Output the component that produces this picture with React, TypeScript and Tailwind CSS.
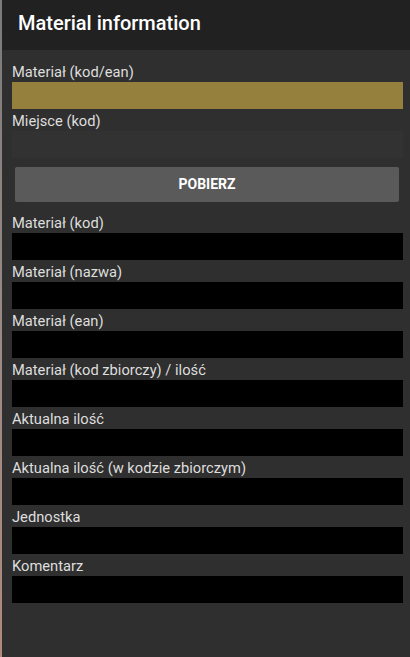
import React from "react";

const fields = [
  "Materiał (kod)",
  "Materiał (nazwa)",
  "Materiał (ean)",
  "Materiał (kod zbiorczy) / ilość",
  "Aktualna ilość",
  "Aktualna ilość (w kodzie zbiorczym)",
  "Jednostka",
  "Komentarz",
];

const Label: React.FC<{ text: string }> = ({ text }) => (
  <div className="h-[22px] pl-[10px] pt-[1px] text-[14.7px] leading-[22px] text-[#dedede]">{text}</div>
);

export default function App() {
  return (
    <div className="flex h-[657px] w-[410px] font-['Roboto',sans-serif]">
      <div className="w-[2px] bg-gradient-to-b from-[#7a7a7a] via-[#9a8a86] to-[#b08a7c]" />
      <div className="flex flex-1 flex-col bg-[#2f2f2f]">
        <div className="h-[50px] bg-[#212121] pl-[16px] text-[20px] font-medium leading-[47px] text-white">
          Material information
        </div>
        <div className="flex flex-col pr-[7px] pt-[10px]">
          <Label text="Materiał (kod/ean)" />
          <div className="ml-[10px] h-[27px] bg-[#95803d]" />
          <Label text="Miejsce (kod)" />
          <div className="ml-[10px] h-[27px] bg-[#323232]" />
          <div className="ml-[13px] mr-[4px] mt-[9px] flex h-[35px] items-center justify-center rounded-[2px] bg-[#5a5a5a] text-[14px] font-bold text-white">
            POBIERZ
          </div>
          <div className="h-[9px]" />
          {fields.map((f) => (
            <div key={f} className="flex flex-col">
              <Label text={f} />
              <div className="ml-[10px] h-[27px] bg-black" />
            </div>
          ))}
        </div>
      </div>
    </div>
  );
}
